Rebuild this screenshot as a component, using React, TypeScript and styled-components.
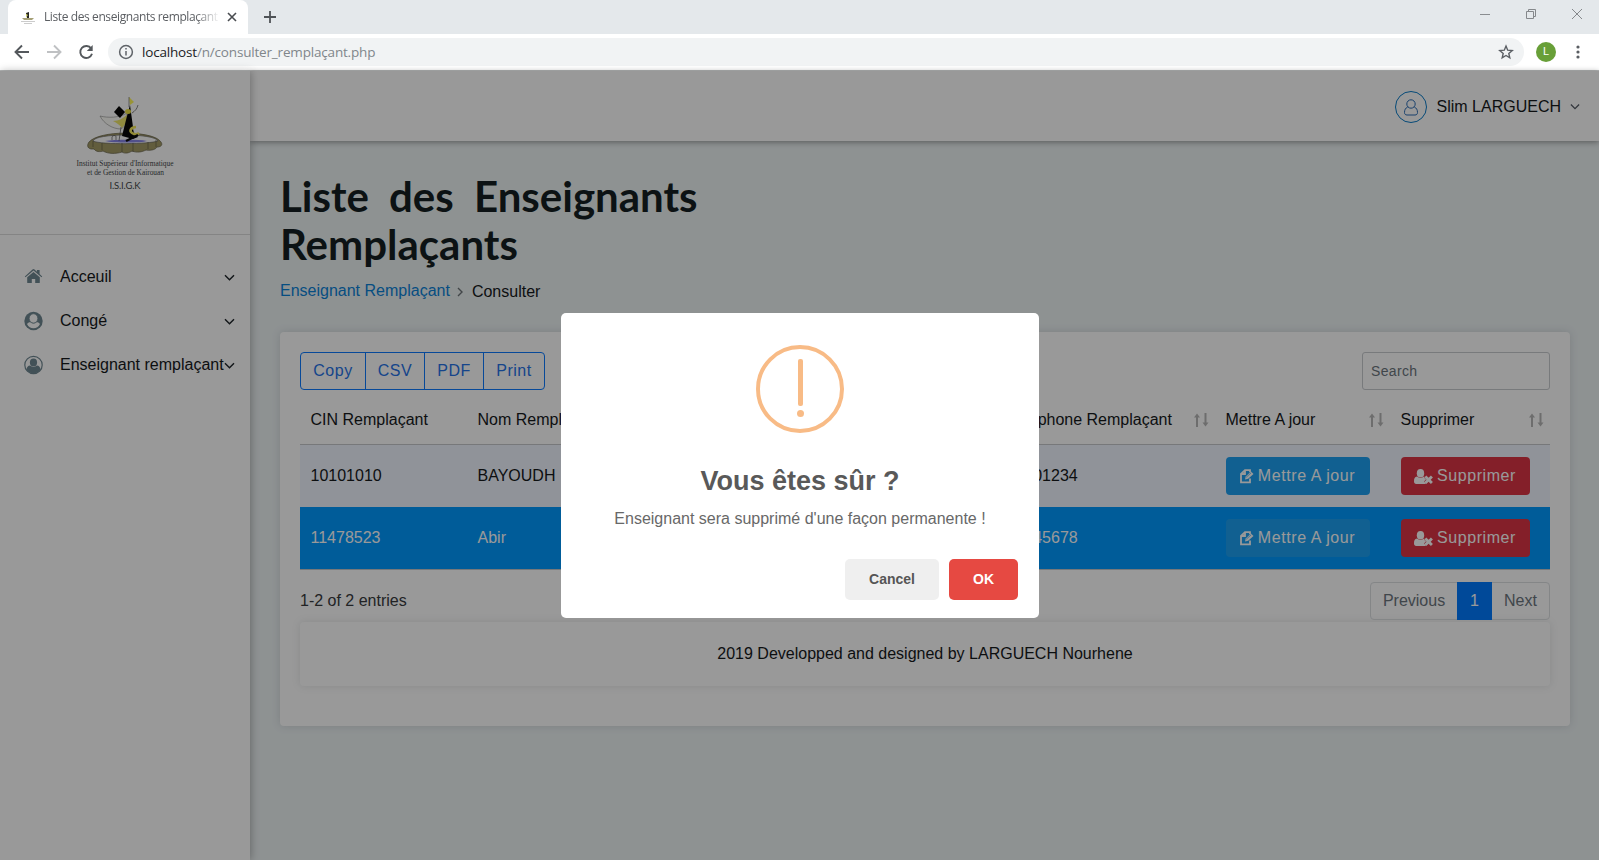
import React from 'react';
import styled, { createGlobalStyle } from 'styled-components';

const Global = createGlobalStyle`
  * { box-sizing: border-box; }
  body { margin: 0; overflow: hidden; font-family: "Liberation Sans", Arial, sans-serif; font-size: 16px; line-height: 24px; color: #16191c; }
  button, input { font: inherit; }
  svg { display: block; flex: none; }
`;

const Window = styled.div`
  display: flex; flex-direction: column; width: 1599px; height: 860px; background: #fff; overflow: hidden;
`;

/* Browser frame */
const TabStrip = styled.div`
  display: flex; align-items: flex-start; height: 34px; padding-left: 8px; background: #e4e8eb; flex: none;
`;
const Tab = styled.div`
  display: flex; align-items: center; width: 240px; height: 34px; padding: 0 10px 0 12px;
  background: #fff; border-radius: 8px 8px 0 0;
`;
const TabTitle = styled.span`
  flex: 1; margin: 0 6px 0 8px; overflow: hidden; white-space: nowrap; color: #5b5e62;
  font: 12px/16px "Open Sans", "Noto Sans", sans-serif; letter-spacing: -0.4px;
  mask-image: linear-gradient(to right, #000 86%, transparent 100%);
`;
const NewTab = styled.div`padding: 10px 0 0 16px;`;
const WindowControls = styled.div`
  display: flex; margin-left: auto; align-items: center; gap: 34px; height: 28px; padding-right: 16px;
`;
const Toolbar = styled.div`
  display: flex; align-items: center; height: 36px; padding: 0 16px 0 14px; background: #fff; flex: none;
`;
const NavIcons = styled.div`display: flex; gap: 16px; width: 94px; align-items: center;`;
const Address = styled.div`
  display: flex; flex: 1; align-items: center; height: 28px; padding: 0 10px; border-radius: 14px; background: #f1f3f4;
`;
const Url = styled.div`
  flex: 1; margin-left: 8px; color: #80868b; font: 13.5px/20px "Open Sans", "Noto Sans", sans-serif; letter-spacing: -0.18px;
  b { font-weight: 400; color: #202124; }
`;
const Profile = styled.div`
  width: 20px; height: 20px; margin: 0 17px 0 12px; border-radius: 50%; background: #689f38; color: #fff;
  font: 11px/20px Roboto, sans-serif; text-align: center;
`;

/* Page */
const Page = styled.div`
  position: relative; display: flex; flex: 1; border-top: 1px solid #b4b6b6; background: #edf3f4;
`;
const Sidebar = styled.aside`
  z-index: 2; width: 250px; background: #fff; box-shadow: 1px 0 8px rgba(0,0,0,.28); flex: none;
`;
const Brand = styled.div`
  display: flex; justify-content: center; height: 164px; padding-top: 25px; border-bottom: 1px solid #ddd;
`;
const Menu = styled.nav`display: flex; flex-direction: column; padding: 20px 15px 0 23px;`;
const MenuItem = styled.a`
  display: flex; align-items: center; height: 44px; white-space: nowrap; color: #16191c;
  span { flex: 1; width: 0; margin-left: 16px; }
  > svg:last-child { margin-top: 2px; }
`;
const Main = styled.main`display: flex; flex-direction: column; flex: 1; min-width: 0;`;
const TopBar = styled.header`
  z-index: 1; display: flex; align-items: center; justify-content: flex-end; height: 70px; padding: 2px 19px 0 0;
  background: #fff; box-shadow: 0 1px 6px rgba(0,0,0,.4);
`;
const Avatar = styled.div`
  display: flex; align-items: center; justify-content: center; width: 32px; height: 32px; margin-right: 10px;
  border: 1px solid #0b7cc9; border-radius: 50%; color: #2b6cb5;
`;
const UserName = styled.span`margin-right: 9px;`;
const Content = styled.div`padding: 31px 29px 0 30px;`;
const Title = styled.h1`
  width: 460px; margin: 0; color: #141e22; font: 700 42px/48px "Comic Sans MS", Lato, sans-serif;
  word-spacing: 10px; white-space: nowrap;
`;
const Breadcrumb = styled.div`
  display: flex; align-items: center; height: 24px; margin: 11px 0 29px;
  a { color: #0b82d8; }
  svg { margin: 2px 8px 0 7px; }
  span { padding: 2px 0 0 1px; }
`;
const Card = styled.section`
  height: 394px; padding: 20px; border-radius: 4px; background: #fff; box-shadow: 0 0 9px rgba(60,80,90,.17);
`;
const Tools = styled.div`display: flex; justify-content: space-between; height: 38px;`;
const ButtonGroup = styled.div`display: flex; border: 1px solid #0c7bff; border-radius: 4px;`;
const ExportButton = styled.button<{ $w: number }>`
  width: ${p => p.$w}px; padding: 0; border: 0; border-right: 1px solid #0c7bff; background: none; color: #2673e8;
  letter-spacing: .5px;
  &:last-child { border-right: 0; }
`;
const Search = styled.input`
  width: 188px; height: 38px; padding: 0 8px; border: 1px solid #c9cccf; border-radius: 3px; background: none;
  font-size: 14px; letter-spacing: .35px;
  &::placeholder { color: #6c757d; opacity: 1; }
`;
const rowHeight = { head: 55, striped: 62, active: 63 };
const rowFill = { head: 'none', striped: '#f0f5ff', active: '#0099ff' };
const Row = styled.div<{ $kind: 'head' | 'striped' | 'active' }>`
  display: grid; grid-template-columns: 167px 529px 219px 175px 160px; align-items: center;
  height: ${p => rowHeight[p.$kind]}px;
  background: ${p => rowFill[p.$kind]};
  color: ${p => (p.$kind === 'active' ? '#fff' : 'inherit')};
  border-bottom: ${p => (p.$kind === 'striped' ? '0' : '1px solid #c6c9cc')};
  padding-top: ${p => (p.$kind === 'head' ? 5 : 0)}px;
`;
const Cell = styled.div`
  display: flex; align-items: center; justify-content: space-between; padding: 0 6px 0 10.5px; white-space: nowrap;
`;
const Action = styled.button<{ $danger?: boolean }>`
  display: flex; align-items: center; justify-content: center; gap: 4px; width: ${p => (p.$danger ? 129 : 144)}px; height: 38px;
  padding: 0; border: 0; border-radius: 4px; background: ${p => (p.$danger ? '#dc3545' : '#1da1f2')}; color: #fff; letter-spacing: .58px;
`;
const TableFoot = styled.div`display: flex; justify-content: space-between; height: 52px; padding-top: 12px;`;
const Count = styled.span`padding-top: 7px; color: #383b3e;`;
const Pager = styled.div`display: flex; height: 38px; border: 1px solid #dcdfe2; border-radius: 4px; color: #6c757d;`;
const PageLink = styled.a<{ $w: number; $on?: boolean }>`
  width: ${p => p.$w}px; height: 38px; margin-top: -1px; line-height: 37px; text-align: center;
  background: ${p => (p.$on ? '#007bff' : 'none')}; color: ${p => (p.$on ? '#fff' : 'inherit')};
`;
const Footer = styled.footer`
  height: 64px; line-height: 63px; text-align: center; border-radius: 4px; box-shadow: 0 0 8px rgba(60,70,80,.13);
`;

/* Confirmation dialog */
const Overlay = styled.div`
  position: absolute; inset: 0; z-index: 5; background: rgba(0,0,0,.4);
`;
const Dialog = styled.div`
  position: absolute; left: 561px; top: 242px; width: 478px; height: 305px; border-radius: 5px; background: #fff;
  display: flex; flex-direction: column; align-items: center; padding-top: 32px;
`;
const DialogTitle = styled.div`margin-top: 32px; font-size: 27px; line-height: 32px; font-weight: 700; color: #595959;`;
const DialogText = styled.div`margin-top: 10px; line-height: 24px; color: #686868;`;
const DialogButtons = styled.div`display: flex; gap: 10px; align-self: flex-end; margin: 28px 21px 0 0;`;
const DialogButton = styled.button<{ $danger?: boolean }>`
  width: ${p => (p.$danger ? 69 : 94)}px; height: 41px; padding: 0 0 2px; border: 0; border-radius: 5px; font-size: 14px; font-weight: 700;
  background: ${p => (p.$danger ? '#e64942' : '#efefef')}; color: ${p => (p.$danger ? '#fff' : '#555')};
`;

const Chevron = ({ color = '#20262b', size = 11 }) => (
  <svg width={size} height="8" viewBox="0 0 11 8" fill="none" stroke={color} strokeWidth="1.4"><path d="M1 1.2 5.5 5.8 10 1.2" /></svg>
);
const SortArrows = () => (
  <svg width="16" height="16" viewBox="0 0 16 16" fill="none" stroke="#b6b6b6" strokeWidth="2">
    <path d="M4 15V4M12.500 1v11" /><path d="M1 5.500h6L4 1.500zM9.500 10.500h6l-3 4z" fill="#b6b6b6" stroke="none" />
  </svg>
);
const EditIcon = () => (
  <svg width="14" height="15" viewBox="0 0 14 15" fill="none" stroke="#fff" strokeWidth="1.8">
    <path d="M10 9.500v3.800H1V5l4-3.800h5v2M5 1.500V5H1.500" /><path d="m5 10.500.7-3L11 2.600 13.500 5 8.200 9.800z" fill="#fff" stroke="none" />
    <path d="m6.200 8.300 5-4.500" stroke="#1da1f2" strokeWidth=".6" />
  </svg>
);
const RemoveUserIcon = () => (
  <svg width="19" height="15" viewBox="0 0 19 15" fill="#fff">
    <ellipse cx="6.500" cy="4.300" rx="3.700" ry="4.300" />
    <path d="M3 7.600C.7 8 0 9.800 0 12.500 0 14 .8 15 2.200 15h8.600c.7 0 1-.1 1.300-.4L10 12.500l2-2-2-2 .7-.6L10 7.600C7.800 9.400 5.200 9.400 3 7.600z" />
    <path d="m12.300 6.600 2.300 2.200 2.300-2.200 2 2-2.200 2.200 2.200 2.200-2 2-2.300-2.200-2.300 2.200-2-2 2.200-2.200-2.200-2.200z" />
  </svg>
);
const HomeIcon = () => (
  <svg width="21" height="18" viewBox="0 0 21 18" fill="#6f8791">
    <path d="M2.500 9.200 10.500 2.400l8 6.800.7-.8-2.600-2.300V2h-2.700v1.800L11.500 1.400a1.600 1.600 0 0 0-2 0L1.800 8.400z" />
    <path d="m4.200 9.300 6.300-5.400 6.300 5.400v5.100c0 .4-.3.6-.6.6h-4v-4H8.800v4h-4a.6.6 0 0 1-.6-.6z" />
  </svg>
);
const UserDiscIcon = () => (
  <svg width="21" height="20" viewBox="0 0 21 20">
    <circle cx="10.500" cy="10" r="9.200" fill="#6f8791" />
    <path d="M4.100 13.200c.5-1.500 1.700-2 3.200-2 1.800 1.700 4.600 1.700 6.400 0 1.500 0 2.700.5 3.200 2-1.300 2.400-3.500 4-6.400 4s-5.100-1.600-6.400-4z" fill="#fff" />
    <ellipse cx="10.500" cy="7.400" rx="4.300" ry="4.600" fill="#fff" stroke="#6f8791" strokeWidth=".7" />
  </svg>
);
const UserRingIcon = () => (
  <svg width="21" height="20" viewBox="0 0 21 20">
    <circle cx="10.500" cy="10" r="8.700" fill="none" stroke="#6f8791" strokeWidth="1.200" />
    <ellipse cx="10.500" cy="7.400" rx="3.600" ry="3.900" fill="#6f8791" />
    <path d="M3.500 14.700c.1-2.300 1.500-4 3.600-4.100 2 1.600 4.800 1.600 6.800 0 2.100.1 3.500 1.800 3.600 4.100a8.200 8.200 0 0 1-14 0z" fill="#6f8791" />
  </svg>
);

const Logo = () => (
  <svg width="104" height="104" viewBox="73 96 104 104">
    <path d="M89 142c-2 3-2 6 2 7l3 0c2 3 6 3 9 2 5 3 13 3 19 1 3 2 7 1 10-1 5 2 10 1 14-1 6 1 10-1 11-3 6 0 6-4 2-7-10-9-59-10-70 2z" fill="#a49c66" stroke="#666149" strokeWidth=".7" />
    <path d="M93 141c2-8 62-8 65 0-8 3-56 4-65 0z" fill="#fcfcfc" stroke="#555" strokeWidth=".6" />
    <path d="M105 141c8-1 30-2 42 0-6 2-34 2-42 0z" fill="#8885e8" />
    <path d="M93 141v6M102 143v7M122 143v9M133 143v9M148 142v7M156 140v7" stroke="#625e45" strokeWidth=".7" />
    <path d="M100 116c8 2 19 2 27-3l-1 12-5 4c-8 0-17-5-21-13z" fill="#fdfdf8" stroke="#777" strokeWidth=".5" />
    <path d="M113 121c6 0 10-3 14-6v7l-5 6c-2-3-5-5-9-7z" fill="#eee66a" />
    <path d="M130 105 133 127c0 4 1 7 5 10l-5 2-11-3 5-20z" fill="#080808" />
    <path d="m119 106 6 6-5 6-6-6z" fill="#050505" />
    <path d="m129 97 5 5-4 3z" fill="#fff75a" />
    <path d="M129 97v10" stroke="#555" strokeWidth=".6" />
    <ellipse cx="128" cy="111.500" rx="3" ry="2.500" fill="#eee344" />
    <path d="M138 105c-1 4-3 6-6 8M121 127l-2 14M112 140v-3c1-2 4-2 4 0v3" stroke="#555" strokeWidth=".7" fill="none" />
    <path d="M136 127c-5 0-7 4-4 6s5 2 7 0" fill="none" stroke="#f5e95d" strokeWidth="2.600" />
    <path d="m126 141 12-6" stroke="#090909" strokeWidth="2.500" />
    <g fill="#45484a" textAnchor="middle">
      <text x="125" y="166.300" fontFamily="Liberation Serif, serif" fontSize="7.500" textLength="97" lengthAdjust="spacingAndGlyphs">Institut Supérieur d'Informatique</text>
      <text x="125.500" y="175" fontFamily="Liberation Serif, serif" fontSize="7.500" textLength="77" lengthAdjust="spacingAndGlyphs">et de Gestion de Kairouan</text>
      <text x="125" y="188.500" fontFamily="Lato, sans-serif" fontSize="9.500" textLength="31">I.S.I.G.K</text>
    </g>
  </svg>
);

const menu = [
  { label: 'Acceuil', icon: <HomeIcon /> },
  { label: 'Congé', icon: <UserDiscIcon /> },
  { label: 'Enseignant remplaçant', icon: <UserRingIcon /> },
];
const teachers = [
  { cin: '10101010', nom: 'BAYOUDH', tel: '50101234' },
  { cin: '11478523', nom: 'Abir', tel: '12345678' },
];

export default function App() {
  return (
    <Window>
      <Global />
      <TabStrip>
        <Tab>
          <svg width="16" height="16" viewBox="0 0 16 16"><path d="M2 9h12l-2 2H4z" fill="#a5a076" /><path d="m6 4 3-1v6H7z" fill="#262620" /><path d="m6 5 2 1-2 2z" fill="#d4d467" /><path d="M1 12.500h14M4 14.500h8" stroke="#ccc" /></svg>
          <TabTitle>Liste des enseignants remplaçant</TabTitle>
          <svg width="12" height="12" viewBox="0 0 12 12" stroke="#494c50" strokeWidth="1.600"><path d="m2 2 8 8M10 2 2 10" /></svg>
        </Tab>
        <NewTab><svg width="12" height="14" viewBox="0 0 12 14" stroke="#4f5357" strokeWidth="1.800"><path d="M0 7h12M6 1v12" /></svg></NewTab>
        <WindowControls>
          <svg width="12" height="12" viewBox="0 0 12 12" stroke="#8a8d90"><path d="M1 6.500h10" /></svg>
          <svg width="12" height="12" viewBox="0 0 12 12" fill="none" stroke="#85888b"><path d="M1.500 3.500h7v7h-7zM3.500 3V1.500h7v7H9" /></svg>
          <svg width="12" height="12" viewBox="0 0 12 12" stroke="#85888b"><path d="m1 1 10 10M11 1 1 11" /></svg>
        </WindowControls>
      </TabStrip>
      <Toolbar>
        <NavIcons>
          <svg width="16" height="16" viewBox="0 0 16 16" fill="none" stroke="#54585c" strokeWidth="1.900"><path d="M15 8H2M8 1.500 1.500 8 8 14.500" /></svg>
          <svg width="16" height="16" viewBox="0 0 16 16" fill="none" stroke="#bfc1c3" strokeWidth="1.900"><path d="M1 8h13M8 1.500 14.500 8 8 14.500" /></svg>
          <svg width="16" height="16" viewBox="0 0 16 16" fill="none" stroke="#54585c" strokeWidth="1.900"><path d="M13.200 4.500A6 6 0 1 0 14 9.800" /><path d="M14.700 1v6H8.800z" fill="#54585c" stroke="none" /></svg>
        </NavIcons>
        <Address>
          <svg width="16" height="16" viewBox="0 0 16 16" fill="none" stroke="#5f6368" strokeWidth="1.500"><circle cx="8" cy="8" r="6.400" /><path d="M8 7v4.500M8 4v1.600" /></svg>
          <Url><b>localhost</b>/n/consulter_remplaçant.php</Url>
          <svg width="16" height="16" viewBox="0 0 16 16" fill="none" stroke="#5a5e63" strokeWidth="1.400"><path d="m8 2 1.700 4.200 4.500.3-3.400 2.900 1 4.400L8 11.500l-3.800 2.300 1-4.400-3.400-2.900 4.500-.3z" /></svg>
        </Address>
        <Profile>L</Profile>
        <svg width="10" height="16" viewBox="0 0 10 16" fill="#5a5e63"><circle cx="5" cy="3" r="1.600" /><circle cx="5" cy="8" r="1.600" /><circle cx="5" cy="13" r="1.600" /></svg>
      </Toolbar>
      <Page>
        <Sidebar>
          <Brand><Logo /></Brand>
          <Menu>
            {menu.map(m => <MenuItem key={m.label}>{m.icon}<span>{m.label}</span><Chevron /></MenuItem>)}
          </Menu>
        </Sidebar>
        <Main>
          <TopBar>
            <Avatar>
              <svg width="14" height="17" viewBox="0 0 14 17" fill="none" stroke="currentColor"><circle cx="7" cy="5" r="4.200" /><path d="M3.700 8C1.500 9 .5 10.800 .5 13.500c0 1.700 1 2.500 2.500 2.500h8c1.500 0 2.500-.8 2.500-2.500 0-2.700-1-4.500-3.200-5.500" /></svg>
            </Avatar>
            <UserName>Slim LARGUECH</UserName>
            <Chevron color="#555b66" size={10} />
          </TopBar>
          <Content>
            <Title>Liste des Enseignants<br />Remplaçants</Title>
            <Breadcrumb>
              <a>Enseignant Remplaçant</a>
              <svg width="6" height="10" viewBox="0 0 6 10" fill="none" stroke="#6f7679" strokeWidth="1.400"><path d="m1 1 4 4-4 4" /></svg>
              <span>Consulter</span>
            </Breadcrumb>
            <Card>
              <Tools>
                <ButtonGroup>
                  <ExportButton $w={65}>Copy</ExportButton><ExportButton $w={59}>CSV</ExportButton>
                  <ExportButton $w={59}>PDF</ExportButton><ExportButton $w={60}>Print</ExportButton>
                </ButtonGroup>
                <Search placeholder="Search" />
              </Tools>
              <Row $kind="head">
                <Cell>CIN Remplaçant</Cell><Cell>Nom Remplaçant</Cell>
                <Cell>Téléphone Remplaçant<SortArrows /></Cell><Cell>Mettre A jour<SortArrows /></Cell>
                <Cell>Supprimer<SortArrows /></Cell>
              </Row>
              {teachers.map((t, i) => (
                <Row key={t.cin} $kind={i ? 'active' : 'striped'}>
                  <Cell>{t.cin}</Cell><Cell>{t.nom}</Cell><Cell>{t.tel}</Cell>
                  <Cell><Action><EditIcon />Mettre A jour</Action></Cell>
                  <Cell><Action $danger><RemoveUserIcon />Supprimer</Action></Cell>
                </Row>
              ))}
              <TableFoot>
                <Count>1-2 of 2 entries</Count>
                <Pager><PageLink $w={86}>Previous</PageLink><PageLink $w={35} $on>1</PageLink><PageLink $w={57}>Next</PageLink></Pager>
              </TableFoot>
              <Footer>2019 Developped and designed by LARGUECH Nourhene</Footer>
            </Card>
          </Content>
        </Main>
        <Overlay>
          <Dialog>
            <svg width="88" height="88" viewBox="0 0 88 88" fill="#f8bb86"><circle cx="44" cy="44" r="42" fill="none" stroke="#f8bb86" strokeWidth="4" /><rect x="42" y="14" width="5" height="47" rx="2" /><circle cx="44.500" cy="68.500" r="3.500" /></svg>
            <DialogTitle>Vous êtes sûr ?</DialogTitle>
            <DialogText>Enseignant sera supprimé d'une façon permanente !</DialogText>
            <DialogButtons><DialogButton>Cancel</DialogButton><DialogButton $danger>OK</DialogButton></DialogButtons>
          </Dialog>
        </Overlay>
      </Page>
    </Window>
  );
}
